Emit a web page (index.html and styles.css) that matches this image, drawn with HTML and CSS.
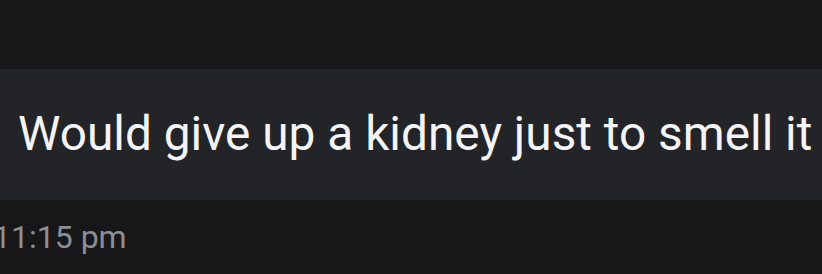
FILE: index.html
```html
<!DOCTYPE html>
<html>
<head>
<meta charset="utf-8">
<link rel="stylesheet" href="styles.css">
</head>
<body>
<div class="chat">
  <div class="bubble"><span class="msg">Would give up a kidney just to smell it</span></div>
  <div class="time">11:15 pm</div>
</div>
</body>
</html>
```
FILE: styles.css
```css
html, body {
  margin: 0;
  padding: 0;
  background: #171719;
  overflow: hidden;
}
.chat {
  width: 822px;
  height: 274px;
  padding-top: 69px;
  box-sizing: border-box;
  font-family: Roboto, "Noto Sans", sans-serif;
}
.bubble {
  height: 131px;
  background: #232428;
  display: flex;
  align-items: center;
  margin-left: -10px;
  margin-right: -10px;
  padding-left: 28px;
  white-space: nowrap;
}
.msg {
  color: #f4f4f6;
  font-size: 47.8px;
  line-height: 1;
}
.time {
  margin-top: 21px;
  margin-left: -7px;
  color: #8b8e94;
  font-size: 32px;
  line-height: 1;
  white-space: nowrap;
}
```
